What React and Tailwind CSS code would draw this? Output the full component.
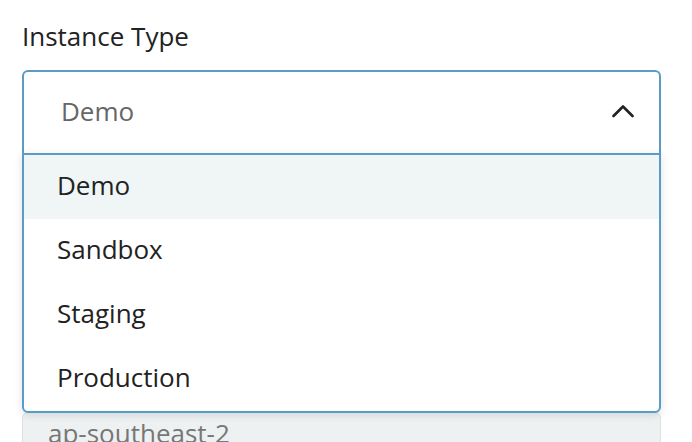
import React, { useState } from 'react';

const options = ['Demo', 'Sandbox', 'Staging', 'Production'];

const ChevronUp = () => (
  <svg width="22" height="14" viewBox="0 0 22 14" fill="none" className="text-[#222]">
    <path d="M1.5 12 L11 2.5 L20.5 12" stroke="currentColor" strokeWidth="2.6" strokeLinecap="round" strokeLinejoin="round" />
  </svg>
);

export default function App() {
  const [value, setValue] = useState('Demo');

  return (
    <div className="h-screen overflow-hidden bg-white pl-[22px] pr-[31px] pt-[19px] font-['Open_Sans',sans-serif]">
      <label className="block text-[26px] leading-[34px] text-[#222]">Instance Type</label>

      <div className="relative z-10 mt-[17px]">
        {/* select trigger */}
        <button className="flex h-[83px] w-full items-center justify-between rounded-t-[6px] border-2 border-b-0 border-[#5b9bc9] bg-white pb-[3px] pl-[37px] pr-[25px] text-left">
          <span className="text-[26px] text-[#666]">{value}</span>
          <ChevronUp />
        </button>

        {/* dropdown menu */}
        <div className="absolute left-0 right-0 top-full rounded-b-[6px] border-2 border-[#5b9bc9] bg-white shadow-[0_2px_8px_rgba(0,0,0,0.12)]">
          {options.map((opt) => (
            <div
              key={opt}
              onClick={() => setValue(opt)}
              className={`flex h-[64px] items-center pb-[3px] pl-[33px] text-[26px] text-[#222] ${opt === value ? 'bg-[#f0f6f6]' : ''}`}
            >
              {opt}
            </div>
          ))}
        </div>
      </div>

      {/* next field (Region), its label sits behind the open menu */}
      <div className="mt-[259px] flex h-[60px] items-start rounded-[6px] border border-[#dde1e3] bg-[#eef1f2] pl-[25px] pt-[1px] text-[26px] text-[#777]">
        ap-southeast-2
      </div>
    </div>
  );
}
